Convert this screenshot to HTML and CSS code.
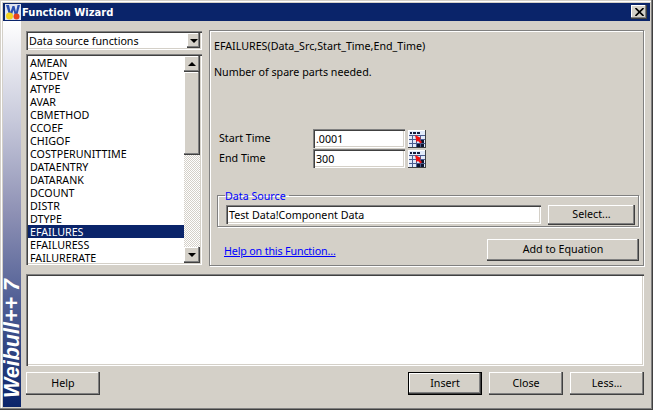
FILE: index.html
```html
<!DOCTYPE html>
<html lang="en">
<head>
<meta charset="utf-8">
<title>Function Wizard</title>
<link rel="stylesheet" href="styles.css">
</head>
<body>
<div class="window">
  <header class="titlebar">
    <svg class="logo" width="16" height="16" viewBox="0 0 16 16">
      <rect width="16" height="16" fill="#dfe3ef"/>
      <path d="M1 1 L4 1 L5.5 8 L7.5 2 L9.5 2 L11 8 L12.5 1 L15 1 L12 12 L10 12 L8.5 6 L6.5 12 L4.500 12 Z" fill="#2a4fb0"/>
      <circle cx="4.500" cy="12" r="3.500" fill="#f2d21c"/>
      <circle cx="11.500" cy="12.500" r="3" fill="#e8431a"/>
    </svg>
    <span class="title">Function Wizard</span>
    <button class="closebtn" aria-label="Close">
      <svg width="9" height="8" viewBox="0 0 9 8"><path d="M0.500 0 L8.500 8 M8.500 0 L0.500 8" stroke="#000" stroke-width="1.600"/></svg>
    </button>
  </header>
  <div class="body">
    <aside class="sidebar"><span class="brand">Weibull++ 7</span></aside>
    <main class="main">
      <div class="top">
        <div class="leftcol">
          <div class="combo">
            <span class="combo-text">Data source functions</span>
            <span class="sbtn"><i class="arrow-down"></i></span>
          </div>
          <div class="list">
            <ul class="items">
              <li>AMEAN</li><li>ASTDEV</li><li>ATYPE</li><li>AVAR</li><li>CBMETHOD</li><li>CCOEF</li><li>CHIGOF</li><li>COSTPERUNITTIME</li><li>DATAENTRY</li><li>DATARANK</li><li>DCOUNT</li><li>DISTR</li><li>DTYPE</li><li class="sel">EFAILURES</li><li>EFAILURESS</li><li>FAILURERATE</li>
            </ul>
            <div class="scrollbar">
              <span class="sbtn"><i class="arrow-up"></i></span>
              <span class="thumb"></span>
              <span class="track"></span>
              <span class="sbtn"><i class="arrow-down"></i></span>
            </div>
          </div>
        </div>
        <section class="panel">
          <p class="sig">EFAILURES(Data_Src,Start_Time,End_Time)</p>
          <p class="desc">Number of spare parts needed.</p>
          <div class="params">
            <div class="param">
              <label class="plabel">Start Time</label>
              <span class="field pfield">.0001</span>
              <button class="cellbtn" aria-label="Pick start time"><svg width="16" height="16" viewBox="0 0 16 16"><use href="#cells"/></svg></button>
            </div>
            <div class="param">
              <label class="plabel">End Time</label>
              <span class="field pfield">300</span>
              <button class="cellbtn" aria-label="Pick end time"><svg width="16" height="16" viewBox="0 0 16 16"><use href="#cells"/></svg></button>
            </div>
          </div>
          <fieldset class="group">
            <legend class="legend">Data Source</legend>
            <span class="field srcfield">Test Data!Component Data</span>
            <button class="btn selectbtn">Select...</button>
          </fieldset>
          <div class="panelfoot">
            <a class="helplink" href="#">Help on this Function...</a>
            <button class="btn addbtn">Add to Equation</button>
          </div>
        </section>
      </div>
      <div class="memo"></div>
      <footer class="actions">
        <button class="btn act">Help</button>
        <span class="spacer"></span>
        <button class="btn act default">Insert</button>
        <button class="btn act">Close</button>
        <button class="btn act">Less...</button>
      </footer>
    </main>
  </div>
</div>
<svg class="defs" width="0" height="0">
  <defs>
    <g id="cells">
      <rect width="16" height="16" fill="#e2eafa"/>
      <path d="M0 4.500H16M0 8.500H16M0 12.500H16M3.500 4V16M7.500 4V16M11.500 4V16" stroke="#4a5c90" stroke-width="1"/>
      <path d="M1 1H3V3H1Z M4 1H7V3H4Z M8 1H11V3H8Z" fill="#101c40"/>
      <path d="M8 13H11V16H8Z M12 9H15V12H12Z M12 13H15V16H12Z" fill="#0c1530"/>
      <path d="M6 4 L12 7 L10.500 8.500 L13 11 L11.500 12.500 L9 10 L7.500 11 Z" fill="#f01010"/>
    </g>
  </defs>
</svg>
</body>
</html>
```
FILE: styles.css
```css
* { box-sizing: border-box; }
html, body { margin: 0; padding: 0; }
body {
  width: 653px;
  height: 410px;
  overflow: hidden;
  background: #d4d0c8;
  font-family: "Noto Sans", Arial, sans-serif;
  font-size: 10.7px;
  color: #000;
}
.defs { position: absolute; }
.window {
  width: 653px;
  height: 410px;
  display: flex;
  flex-direction: column;
  padding: 3px;
  background: #d4d0c8;
  box-shadow: inset -1px -1px 0 #404040, inset -2px -2px 0 #808080, inset 1px 1px 0 #d4d0c8, inset 2px 2px 0 #fff;
}
.titlebar {
  height: 18px;
  flex: none;
  display: flex;
  align-items: center;
  background: #0a246a;
  color: #fff;
  padding: 0 3px 0 2px;
}
.logo { flex: none; }
.title {
  flex: 1;
  margin-left: 1px;
  font-family: "DejaVu Sans", sans-serif;
  font-weight: bold;
  font-size: 10px;
}
.closebtn {
  width: 16px;
  height: 14px;
  padding: 0;
  border: 0;
  background: #d4d0c8;
  display: flex;
  align-items: center;
  justify-content: center;
  box-shadow: inset -1px -1px 0 #404040, inset -2px -2px 0 #808080, inset 1px 1px 0 #fff;
}
.body { flex: 1; display: flex; min-height: 0; }
.sidebar {
  width: 18px;
  flex: none;
  display: flex;
  justify-content: center;
  align-items: flex-end;
  padding-bottom: 9px;
  background: linear-gradient(#ffffff 0, #c9cbdc 25%, #8d90b4 50%, #4a5a92 75%, #0a246a 100%);
}
.brand {
  writing-mode: vertical-rl;
  transform: rotate(180deg);
  color: #fff;
  font-family: "Liberation Sans", Arial, sans-serif;
  font-style: italic;
  font-weight: bold;
  font-size: 21.5px;
  line-height: 18px;
  white-space: nowrap;
}
.main {
  flex: 1;
  min-width: 0;
  display: flex;
  flex-direction: column;
  padding: 9px 6px 12px 5px;
}
.top { display: flex; gap: 7px; height: 236px; flex: none; }
.leftcol { width: 176px; flex: none; display: flex; flex-direction: column; padding-top: 1px; gap: 4px; }
.combo, .list, .field, .memo {
  background: #fff;
  box-shadow: inset 1px 1px 0 #808080, inset 2px 2px 0 #404040, inset -1px -1px 0 #fff, inset -2px -2px 0 #d4d0c8;
}
.combo {
  height: 19px;
  flex: none;
  display: flex;
  align-items: center;
  justify-content: space-between;
  padding: 2px;
}
.combo-text { padding-left: 1px; }
.combo .sbtn { width: 13px; height: 15px; }
.sbtn {
  width: 16px;
  height: 16px;
  flex: none;
  display: flex;
  align-items: center;
  justify-content: center;
  background: #d4d0c8;
  box-shadow: inset -1px -1px 0 #404040, inset -2px -2px 0 #808080, inset 1px 1px 0 #fff;
}
.arrow-down, .arrow-up {
  width: 0;
  height: 0;
  border-left: 4px solid transparent;
  border-right: 4px solid transparent;
}
.arrow-down { border-top: 4px solid #000; }
.arrow-up { border-bottom: 4px solid #000; }
.list {
  height: 211px;
  flex: none;
  display: flex;
  padding: 2px;
}
.items {
  list-style: none;
  margin: 0;
  padding: 0;
  flex: 1;
  min-width: 0;
}
.items li { height: 13px; line-height: 15px; padding-left: 2px; white-space: nowrap; }
.items .sel { background: #0a246a; color: #fff; }
.scrollbar { width: 16px; height: 207px; flex: none; display: flex; flex-direction: column; }
.thumb {
  height: 83px;
  flex: none;
  background: #d4d0c8;
  box-shadow: inset -1px -1px 0 #404040, inset -2px -2px 0 #808080, inset 1px 1px 0 #fff;
}
.track {
  flex: 1;
  background: conic-gradient(#d4d0c8 25%, #fff 0 50%, #d4d0c8 0 75%, #fff 0) 0 0 / 2px 2px;
}
.panel, .group {
  border: 1px solid #808080;
  box-shadow: 1px 1px 0 #fff, inset 1px 1px 0 #fff;
}
.panel {
  flex: 1;
  min-width: 0;
  padding: 9px 4px 0 4px;
  display: flex;
  flex-direction: column;
}
.sig { margin: 0; height: 13px; line-height: 13px; }
.desc { margin: 13px 0 0; height: 13px; line-height: 13px; }
.params { margin: 50px 0 0 5px; display: flex; flex-direction: column; gap: 1px; }
.param { display: flex; align-items: center; height: 19px; }
.plabel { width: 94px; flex: none; padding-bottom: 1px; }
.field {
  display: flex;
  align-items: center;
  padding-left: 3px;
  height: 19px;
}
.pfield { width: 92px; flex: none; }
.cellbtn {
  width: 18px;
  height: 18px;
  margin-left: 3px;
  padding: 1px;
  border: 0;
  background: #d4d0c8;
  box-shadow: inset -1px -1px 0 #404040, inset 1px 1px 0 #fff;
}
.cellbtn svg { display: block; }
.group {
  display: block;
  margin: 22px 0 0 3px;
  width: 422px;
  height: 37px;
  padding: 4px 3px 0 8px;
  min-inline-size: 0;
}
.legend {
  padding: 0 3px 0 0;
  margin-left: -1px;
  color: #0000ff;
  line-height: 13px;
  height: 11px;
}
.srcfield { width: 315px; float: left; }
.selectbtn { width: 87px; height: 20px; float: right; }
.btn {
  padding: 0 0 2px;
  border: 0;
  background: #d4d0c8;
  font: inherit;
  color: #000;
  box-shadow: inset -1px -1px 0 #404040, inset -2px -2px 0 #808080, inset 1px 1px 0 #fff;
}
.panelfoot {
  margin: 12px 0 0 10px;
  display: flex;
  align-items: center;
  justify-content: space-between;
}
.helplink { color: #0000ff; text-decoration: underline; letter-spacing: -0.15px; padding-top: 2px; }
.addbtn { width: 152px; height: 22px; }
.memo { height: 92px; flex: none; margin-top: 8px; }
.actions { display: flex; gap: 7px; margin-top: 6px; }
.spacer { flex: 1; }
.act { width: 74px; height: 23px; flex: none; }
.default {
  box-shadow: inset 0 0 0 1px #000, inset -2px -2px 0 #404040, inset -3px -3px 0 #808080, inset 2px 2px 0 #fff;
}
```
